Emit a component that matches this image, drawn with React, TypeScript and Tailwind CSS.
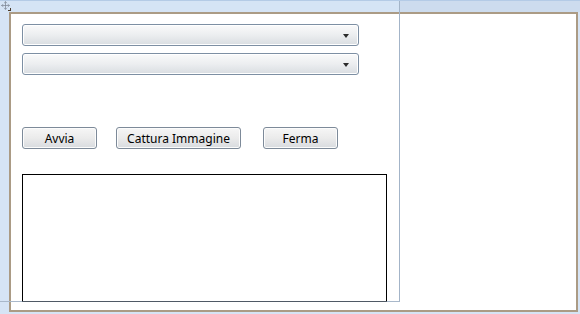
import { Move } from 'lucide-react';

function Combo() {
    return (
        <div className="relative w-[337px] h-[22px] rounded-[3px] border border-[#7d8fa3] bg-gradient-to-b from-[#fafafa] via-[#eceef0] to-[#d9dde1] shadow-[inset_0_0_0_1px_#ffffff]">
            <div className="absolute right-[9px] top-[9px] w-0 h-0 border-l-[3.5px] border-r-[3.5px] border-t-[4px] border-l-transparent border-r-transparent border-t-[#2b2b2b]" />
        </div>
    );
}

function Btn({ label, w }: { label: string; w: string }) {
    return (
        <button
            className={`${w} block shrink-0 h-[22px] pt-[2px] rounded-[3px] border border-[#7d8a99] bg-gradient-to-b from-[#f6f6f6] via-[#ebebeb] to-[#d8dbdf] shadow-[inset_0_0_0_1px_#fcfcfc] text-[12px] leading-none text-black`}
        >
            {label}
        </button>
    );
}

export default function App() {
    return (
        <div className="relative w-[580px] h-[314px] overflow-hidden bg-[#d6e4f5] font-['Noto_Sans','Open_Sans',sans-serif]">
            {/* barra superiore del designer */}
            <div className="absolute left-0 top-0 w-[580px] h-[12px] flex">
                <div className="w-[400px] h-full bg-[#d5e4f5] border-t border-[#b4cbe6]" />
                <div className="flex-1 h-full bg-[#cddcee] border-t border-[#b4cbe6]" />
            </div>
            <div className="absolute left-[1px] top-[1px] text-[#7d8794]">
                <Move size={9} strokeWidth={2} />
            </div>
            <div className="absolute left-[8px] top-[8px] w-[3px] h-[3px] border-r border-b border-[#4a3a2a]" />

            <div className="absolute left-[9px] top-[12px] w-[569px] h-[300px] border-2 border-[#ab9b85] bg-white">
                <div className="flex flex-col items-start pl-[11px] pt-[10px]">
                    <div className="flex flex-col gap-[7px]">
                        <Combo />
                        <Combo />
                    </div>
                    <div className="flex items-start h-[22px] mt-[52px]">
                        <Btn label="Avvia" w="w-[75px]" />
                        <div className="w-[19px]" />
                        <Btn label="Cattura Immagine" w="w-[125px]" />
                        <div className="w-[22px]" />
                        <Btn label="Ferma" w="w-[75px]" />
                    </div>
                    <div className="mt-[25px] w-[365px] h-[128px] border border-black border-b-[#4f5965]" />
                </div>
            </div>

            {/* linee della griglia */}
            <div className="absolute left-[399px] top-[1px] w-px h-[301px] bg-[#a3b4c8]" />
            <div className="absolute left-0 top-[301px] w-[400px] h-px bg-[#a9b8ca]" />
            <div className="absolute left-[22px] top-[301px] w-[365px] h-px bg-[#4f5965]" />
        </div>
    );
}
